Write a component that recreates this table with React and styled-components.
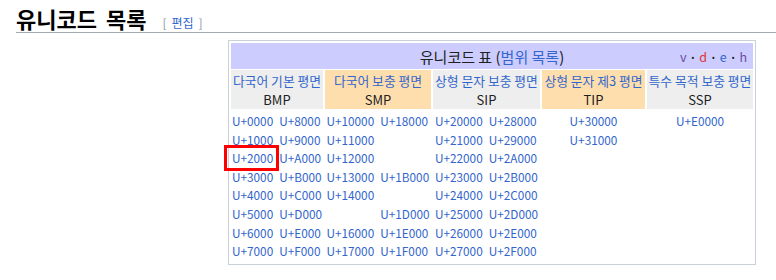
import styled, { createGlobalStyle } from "styled-components";

const GlobalStyle = createGlobalStyle`
  body {
    margin: 0;
    background: #fff;
    font-family: "Noto Sans CJK KR", "Noto Sans", sans-serif;
    color: #202122;
  }
`;

const Page = styled.div`
  padding: 4px 0 0 16px;
`;

const Heading = styled.h2`
  margin: 0;
  height: 28px;
  font-size: 22px;
  font-weight: 600;
  line-height: 28px;
  word-spacing: 4px;
  color: #000;
  border-bottom: 1px solid #a2a9b1;
  white-space: nowrap;
`;

const EditLink = styled.span`
  margin-left: 16px;
  font-size: 12px;
  font-weight: normal;
  line-height: 1;
  color: #8a93a6;
  word-spacing: 0;

  a {
    color: #3366cc;
    text-decoration: none;
    margin: 0 5px;
  }
`;

const NavBox = styled.div`
  margin: 7px 0 0 212px;
  width: 528px;
  box-sizing: border-box;
  border: 1px solid #c8d0d8;
  padding: 2px;
  display: grid;
  row-gap: 1px;
`;

const TitleBar = styled.div`
  background: #ccccff;
  height: 26px;
  display: grid;
  grid-template-columns: 1fr auto 1fr;
  align-items: center;
  padding: 0 6px;
`;

const Title = styled.div`
  grid-column: 2;
  font-size: 15px;
  color: #202122;

  a {
    color: #3366cc;
    text-decoration: none;
  }
`;

const Vde = styled.div`
  justify-self: end;
  font-size: 12.5px;
  display: flex;
  gap: 5px;
  align-items: center;
`;

const VdeLink = styled.span`
  color: ${(p) => p.$color};
`;

const Dot = styled.span`
  font-size: 8px;
  color: #202122;
`;

const PlaneGrid = styled.div`
  display: grid;
  grid-template-columns: 92px 106px 107px 103px 106px;
  column-gap: 2px;
  row-gap: 2px;
`;

const HeaderCell = styled.div`
  background: ${(p) => p.$bg};
  height: 39px;
  display: flex;
  flex-direction: column;
  align-items: center;
  justify-content: center;
  font-size: 12.8px;
  line-height: 19px;
  white-space: nowrap;
`;

const PlaneName = styled.span`
  color: #3366cc;
`;

const PlaneAbbr = styled.span`
  font-size: 13px;
  color: #202122;
`;

const PlaneCell = styled.div`
  display: flex;
  justify-content: center;
  gap: 6px;
  padding: 1px 0 1px;
`;

const CodeColumn = styled.div`
  display: flex;
  flex-direction: column;
`;

const Code = styled.span`
  font-size: 11.8px;
  line-height: 18.6px;
  color: #3366cc;
  white-space: nowrap;
  position: relative;

  ${(p) =>
    p.$marked &&
    `
    &::after {
      content: "";
      position: absolute;
      left: -8px;
      top: 50%;
      margin-top: -13px;
      width: 55px;
      height: 26px;
      box-sizing: border-box;
      border: 3px solid #ff0000;
    }
  `}
`;

const planes = [
  {
    name: "다국어 기본 평면",
    abbr: "BMP",
    bg: "#eeeeee",
    cols: [
      ["U+0000", "U+1000", "U+2000", "U+3000", "U+4000", "U+5000", "U+6000", "U+7000"],
      ["U+8000", "U+9000", "U+A000", "U+B000", "U+C000", "U+D000", "U+E000", "U+F000"],
    ],
  },
  {
    name: "다국어 보충 평면",
    abbr: "SMP",
    bg: "#ffdead",
    cols: [
      ["U+10000", "U+11000", "U+12000", "U+13000", "U+14000", "", "U+16000", "U+17000"],
      ["U+18000", "", "", "U+1B000", "", "U+1D000", "U+1E000", "U+1F000"],
    ],
  },
  {
    name: "상형 문자 보충 평면",
    abbr: "SIP",
    bg: "#eeeeee",
    cols: [
      ["U+20000", "U+21000", "U+22000", "U+23000", "U+24000", "U+25000", "U+26000", "U+27000"],
      ["U+28000", "U+29000", "U+2A000", "U+2B000", "U+2C000", "U+2D000", "U+2E000", "U+2F000"],
    ],
  },
  {
    name: "상형 문자 제3 평면",
    abbr: "TIP",
    bg: "#ffdead",
    cols: [["U+30000", "U+31000"]],
  },
  {
    name: "특수 목적 보충 평면",
    abbr: "SSP",
    bg: "#eeeeee",
    cols: [["U+E0000"]],
  },
];

export default function App() {
  return (
    <>
      <GlobalStyle />
      <Page>
        <Heading>
          유니코드 목록
          <EditLink>
            [<a href="#">편집</a>]
          </EditLink>
        </Heading>

        <NavBox>
          <TitleBar>
            <Title>
              유니코드 표 (<a href="#">범위 목록</a>)
            </Title>
            <Vde>
              <VdeLink $color="#6b4ba1">v</VdeLink>
              <Dot>•</Dot>
              <VdeLink $color="#dd3333">d</VdeLink>
              <Dot>•</Dot>
              <VdeLink $color="#3366cc">e</VdeLink>
              <Dot>•</Dot>
              <VdeLink $color="#6b4ba1">h</VdeLink>
            </Vde>
          </TitleBar>

          <PlaneGrid>
            {planes.map((p) => (
              <HeaderCell key={p.abbr} $bg={p.bg}>
                <PlaneName>{p.name}</PlaneName>
                <PlaneAbbr>{p.abbr}</PlaneAbbr>
              </HeaderCell>
            ))}
            {planes.map((p) => (
              <PlaneCell key={p.abbr}>
                {p.cols.map((col, i) => (
                  <CodeColumn key={i}>
                    {col.map((code, j) => (
                      <Code key={j} $marked={code === "U+2000"}>
                        {code || "\u00a0"}
                      </Code>
                    ))}
                  </CodeColumn>
                ))}
              </PlaneCell>
            ))}
          </PlaneGrid>
        </NavBox>
      </Page>
    </>
  );
}
